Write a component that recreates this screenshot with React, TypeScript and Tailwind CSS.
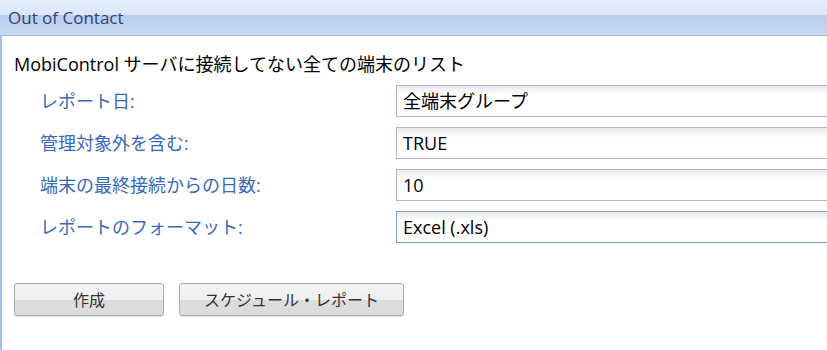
import React from 'react';

const rows = [
  { label: 'レポート日:', value: '全端末グループ', focused: false },
  { label: '管理対象外を含む:', value: 'TRUE', focused: false },
  { label: '端末の最終接続からの日数:', value: '10', focused: false },
  { label: 'レポートのフォーマット:', value: 'Excel (.xls)', focused: true },
];

function Button({ children, width }: { children: React.ReactNode; width: string }) {
  return (
    <button
      type="button"
      className={`${width} h-[33px] rounded-[3px] border border-[#acacac] bg-[linear-gradient(to_bottom,#f4f4f4_0%,#efefef_50%,#dddddd_51%,#dcdcdc_100%)] text-[16px] leading-none text-[#333] shadow-[0_1px_0_#e4e4e4]`}
    >
      {children}
    </button>
  );
}

export default function App() {
  return (
    <div
      className="h-[350px] w-[827px] overflow-hidden bg-white"
      style={{ fontFamily: '"Open Sans", "Noto Sans CJK JP", sans-serif' }}
    >
      <div className="flex h-[36px] items-center border-b border-[#9dbbe8] bg-[linear-gradient(to_bottom,#e6eefa_0%,#dbe6f7_42%,#b9cdf0_44%,#c9d9f3_100%)] pl-[8px]">
        <span className="text-[17px] leading-none text-[#2c4273]">Out of Contact</span>
      </div>
      <div className="h-[314px] border-l-2 border-[#a3c1ec] pl-[12px] pt-[16px]">
        <p className="text-[18px] leading-[24px] text-black">
          MobiControl サーバに接続してない全ての端末のリスト
        </p>
        <div className="mt-[9px] flex flex-col gap-[10px]">
          {rows.map((row) => (
            <div key={row.label} className="flex h-[32px] items-center">
              <span className="w-[382px] pl-[26px] text-[18px] leading-none text-[#3769bd]">
                {row.label}
              </span>
              <div
                className={`flex h-[32px] flex-1 items-center border border-r-0 ${
                  row.focused ? 'border-[#7fa4dd]' : 'border-[#b1b4cb]'
                } bg-[linear-gradient(to_bottom,#e9e9ec_0px,#ffffff_9px)] pl-[6px] text-[18px] leading-none text-black`}
              >
                {row.value}
              </div>
            </div>
          ))}
        </div>
        <div className="mt-[40px] flex gap-[15px]">
          <Button width="w-[150px]">作成</Button>
          <Button width="w-[225px]">スケジュール・レポート</Button>
        </div>
      </div>
    </div>
  );
}
